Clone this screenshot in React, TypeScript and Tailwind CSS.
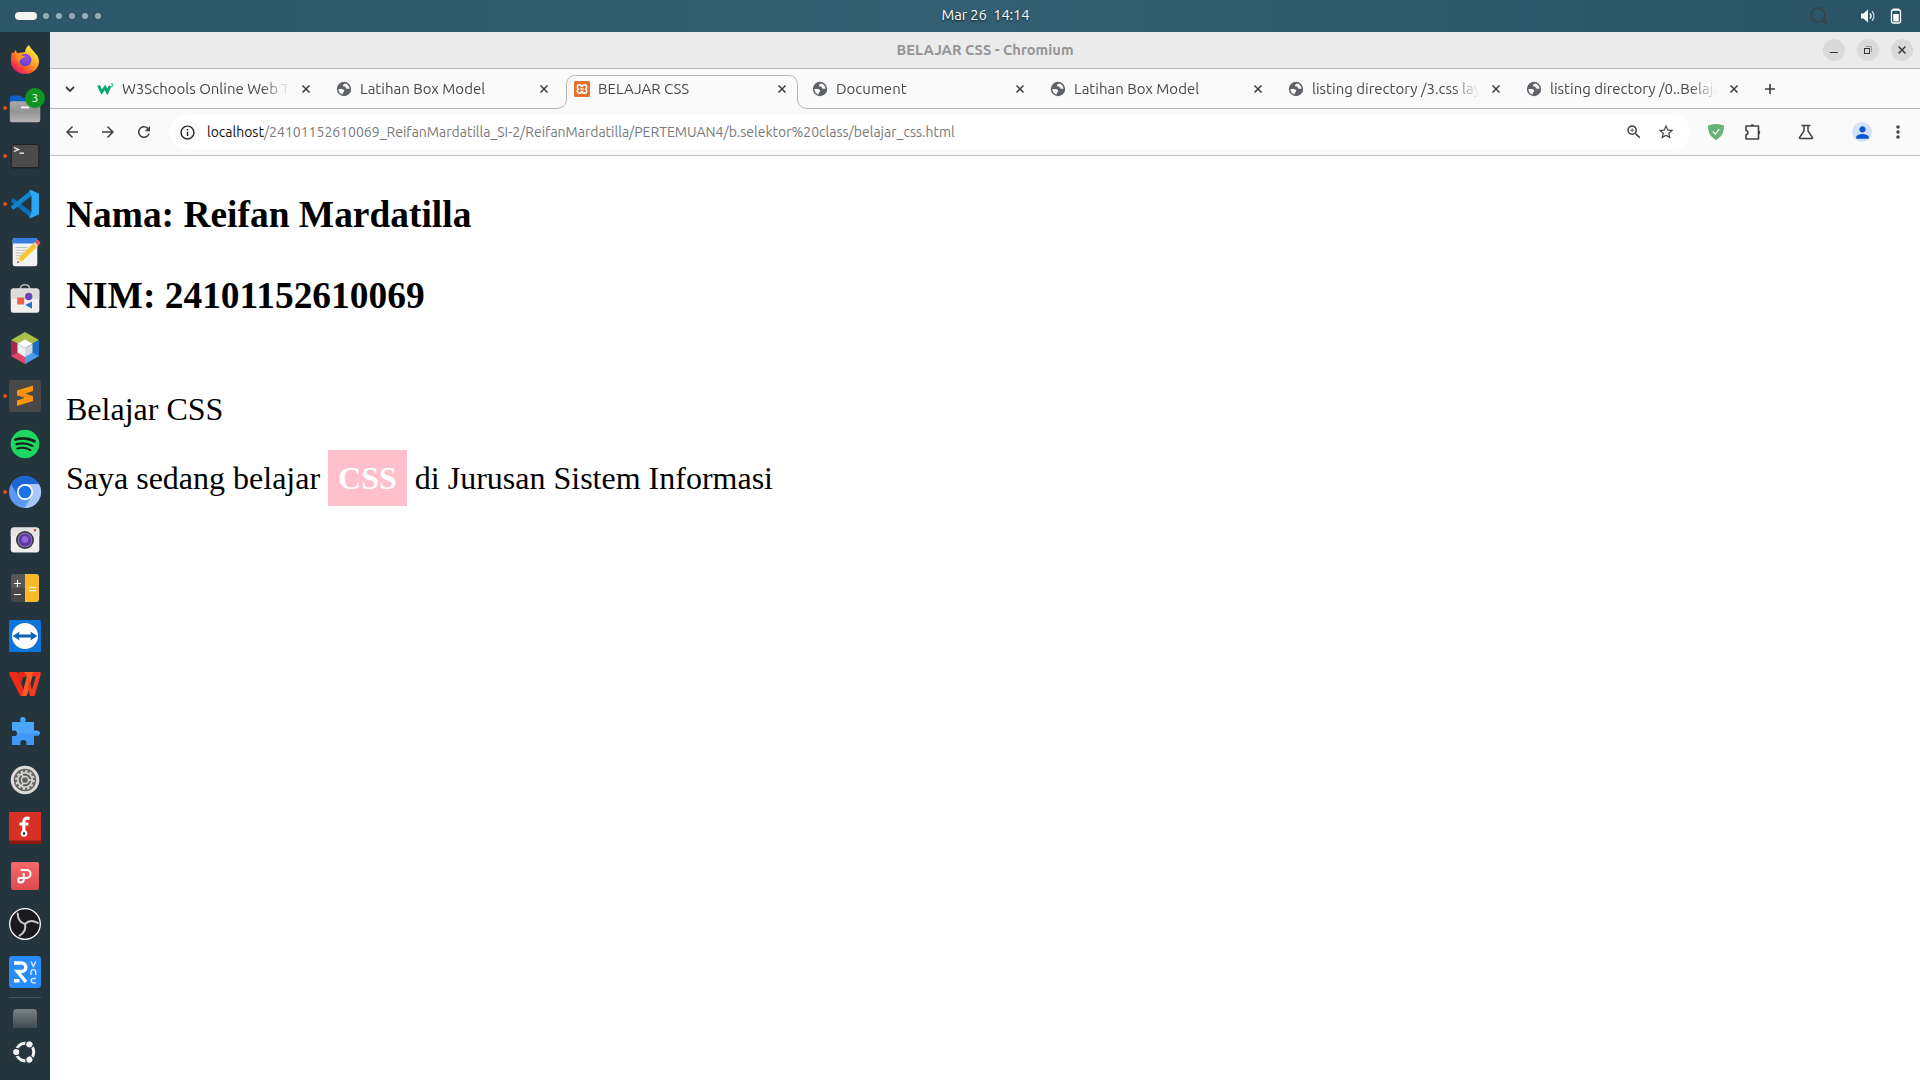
import React from "react";
import {
  MdArrowBack,
  MdArrowForward,
  MdRefresh,
  MdInfoOutline,
  MdStarBorder,
  MdOutlineZoomIn,
  MdMoreVert,
  MdPerson,
} from "react-icons/md";

const UI = "font-['Ubuntu','Noto_Sans',sans-serif]";

function Icon({ children }: { children: React.ReactNode }) {
  return (
    <svg width="32" height="32" viewBox="0 0 32 32" className="block overflow-visible">
      {children}
    </svg>
  );
}

const Firefox = () => (
  <Icon>
    <defs>
      <linearGradient id="ffBody" x1="0.85" y1="0.1" x2="0.2" y2="0.95">
        <stop offset="0" stopColor="#fff04a" />
        <stop offset="0.35" stopColor="#ffb327" />
        <stop offset="0.65" stopColor="#ff6a2b" />
        <stop offset="0.85" stopColor="#f8384a" />
        <stop offset="1" stopColor="#dd1577" />
      </linearGradient>
      <radialGradient id="ffCore" cx="0.6" cy="0.3" r="0.8">
        <stop offset="0" stopColor="#a04be8" />
        <stop offset="1" stopColor="#5040c8" />
      </radialGradient>
    </defs>
    <path d="M20 1c1 3 4 5 6 8 2.500 2 4 5 4 8.500A14 12.800 0 0 1 2 17c0-4 .5-7 1-9l1.500 1.500L6.500 6l1.800 3.200c1.500-.7 3.500-1 5.500-.7L16 8c.3-3 2-5.500 4-7z" fill="url(#ffBody)" />
    <circle cx="16.200" cy="16" r="6.200" fill="url(#ffCore)" />
    <path d="M5.500 9c3-.5 4.500.7 6 2.200l4.300.8c-.2 1.500-1.800 1.900-3.200 2.800-1.700 1-2.500 2.400-2.100 4.700C8 16.500 8 12 5.500 9z" fill="#ff9320" />
  </Icon>
);

const Files = () => (
  <div className="relative">
    <Icon>
      <defs>
        <linearGradient id="fold" x1="0" y1="0" x2="0" y2="1">
          <stop offset="0" stopColor="#a8a8a8" />
          <stop offset="0.5" stopColor="#959595" />
          <stop offset="1" stopColor="#b6b6b6" />
        </linearGradient>
      </defs>
      <path d="M1 12V5.500A2 2 0 0 1 3 3.500h8l3 2.500h14a2 2 0 0 1 2 2v5z" fill="#0d60c8" />
      <rect x="0.8" y="9.300" width="30.500" height="21" rx="2.200" fill="url(#fold)" />
      <rect x="12" y="14.500" width="8" height="1.800" rx="0.500" fill="#fff" />
    </Icon>
    <span className={`absolute -top-1 left-4 flex h-5 w-5 items-center justify-center rounded-full bg-[#0f9620] text-[12px] leading-none text-white shadow-sm ${UI}`}>
      3
    </span>
  </div>
);

const Terminal = () => (
  <Icon>
    <rect x="1.800" y="4" width="28.500" height="24.500" rx="2.500" fill="#202122" />
    <rect x="2.800" y="5" width="26.500" height="22" rx="1.500" fill="#4b4b4b" />
    <path d="M5 7.500l4.500 2L5 11.500M10.500 13.200h4.500" stroke="#fff" strokeWidth="1.300" fill="none" />
  </Icon>
);

const VsCode = () => (
  <Icon>
    <path d="M2.200 12.200l2.200-1.900 19 14.400L22 30 2.200 13.700z" fill="#0a6fb8" />
    <path d="M2.200 19.800l2.200 1.900 19-14.400L22 2 2.200 18.300z" fill="#1184d0" />
    <path d="M22 2l7.200 3.300a1.300 1.300 0 0 1 .8 1.200v19a1.300 1.300 0 0 1-.8 1.200L22 30c-.8.2-1.500-.4-1.500-1L22.500 24V8l-2-5c0-.8.7-1.200 1.500-1z" fill="#2ba6f2" />
  </Icon>
);

const TextEditor = () => (
  <Icon>
    <rect x="3.700" y="2" width="24.600" height="28.300" rx="2.500" fill="#f3f3f3" />
    <path d="M3.700 7.600V4.500A2.500 2.500 0 0 1 6.200 2h19.600a2.500 2.500 0 0 1 2.500 2.500v3.100z" fill="#3a7de0" />
    <path d="M6.500 11.500h12M6.500 14.200h12M6.500 17h10M6.500 19.700h7M6.500 22.500h4" stroke="#bdbdb8" strokeWidth="1" />
    <path d="M8 27l1.700-5L24.500 7.200l3.600 3.600L13 25.500z" fill="#f8c62e" />
    <path d="M8 27l1.700-5 3.300 3.500z" fill="#f2dfc0" />
    <path d="M8 27l.7-2 1.300 1.300z" fill="#333" />
    <path d="M24.500 7.200l1.200-1.200 3.600 3.600-1.200 1.200z" fill="#d8d8d8" />
    <path d="M25.700 6l1.800-1.700a1.500 1.500 0 0 1 2 0L31 5.900a1.500 1.500 0 0 1 0 2l-1.700 1.700z" fill="#e8565b" />
  </Icon>
);

const Store = () => (
  <Icon>
    <path d="M11.300 5.500C11.300 2 13 .8 16 .8s4.700 1.200 4.700 4.700" stroke="#b5b5b2" strokeWidth="1.400" fill="none" />
    <rect x="1.800" y="4.500" width="28.500" height="24.300" rx="2.500" fill="#f1f0ee" />
    <path d="M1.800 15V7a2.500 2.500 0 0 1 2.500-2.500h23.500a2.500 2.500 0 0 1 2.500 2.500v8z" fill="#dddcd9" />
    <rect x="8.200" y="13.500" width="7" height="7" fill="#f0614c" />
    <circle cx="19.700" cy="12.500" r="3.700" fill="#6b45bb" />
    <path d="M23 17.500v7.300l-6.700-3.700z" fill="#2474cd" />
  </Icon>
);

const NetBeans = () => (
  <Icon>
    <path d="M16 0l14 8-7 4-7-4-7 4-7-4z" fill="#aabf49" />
    <path d="M2 8l7 4v8.500L16 24v8L2 24z" fill="#a7284f" />
    <path d="M9 20.500L16 24v8L2 24z" fill="#dc4668" />
    <path d="M30 8l-7 4v8.500L16 24v8l14-8z" fill="#1b6bc0" />
    <path d="M23 20.500L16 24v8l14-8z" fill="#4b9de9" />
    <path d="M16 7.500l7.500 4.300L16 16l-7.500-4.200z" fill="#fff" />
    <path d="M8.500 11.800L16 16v9l-7.500-4.500z" fill="#eef0f2" />
    <path d="M23.500 11.800L16 16v9l7.500-4.500z" fill="#cfd8e2" />
  </Icon>
);

const Sublime = () => (
  <Icon>
    <rect width="32" height="32" rx="2" fill="#484848" />
    <path d="M8 10.500l16-5v5.500l-8.500 2.700L24 16.200V21L8 26v-5.500l8.500-2.700L8 15.300z" fill="#ff9800" />
    <path d="M8 10.500v4.800l16 5.200v-4.300z" fill="#f98f12" />
  </Icon>
);

const Spotify = () => (
  <Icon>
    <circle cx="16" cy="16" r="14.300" fill="#1ed760" />
    <path d="M6.500 11.500c6.500-1.800 13.500-1.200 19 1.800" stroke="#15231c" strokeWidth="2.800" strokeLinecap="round" fill="none" />
    <path d="M7.500 16.200c5.500-1.600 11-1 16 1.700" stroke="#15231c" strokeWidth="2.300" strokeLinecap="round" fill="none" />
    <path d="M8.300 20.500c4.700-1.300 9-.8 13.200 1.600" stroke="#15231c" strokeWidth="1.900" strokeLinecap="round" fill="none" />
  </Icon>
);

const Chromium = () => (
  <Icon>
    <circle cx="16" cy="16" r="16" fill="#5f98f3" />
    <path d="M16 8h13.900A16 16 0 0 1 15.500 32L23 20z" fill="#a9c8fa" />
    <path d="M2.200 8A16 16 0 0 1 29.900 8H16l-7 12z" fill="#1b66d2" />
    <circle cx="16" cy="16" r="8" fill="#fff" />
    <circle cx="16" cy="16" r="6.300" fill="#1a73e8" />
  </Icon>
);

const Camera = () => (
  <Icon>
    <rect x="1.800" y="3.500" width="28.500" height="25" rx="3" fill="#efefee" />
    <path d="M1.800 12V6.500a3 3 0 0 1 3-3h22.500a3 3 0 0 1 3 3V12z" fill="#e3e3e1" />
    <circle cx="16" cy="16" r="9" fill="#3b3846" />
    <circle cx="16" cy="16" r="7.300" fill="#8b88a0" />
    <circle cx="16" cy="16" r="6.500" fill="#623aab" />
    <circle cx="16" cy="15.500" r="3.300" fill="#9566d9" />
    <rect x="25" y="5.200" width="2" height="2" fill="#e02020" />
  </Icon>
);

const Calculator = () => (
  <Icon>
    <path d="M2 5a3 3 0 0 1 3-3h11v28H5a3 3 0 0 1-3-3z" fill="#484848" />
    <path d="M2 5a3 3 0 0 1 3-3h11v14H2z" fill="#575757" />
    <path d="M16 2h11a3 3 0 0 1 3 3v22a3 3 0 0 1-3 3H16z" fill="#fbb829" />
    <path d="M5 11.500h7M8.500 8v7M5 22.500h7M20 15.500h7M20 18.700h7" stroke="#fff" strokeWidth="1.200" />
  </Icon>
);

const TeamViewer = () => (
  <Icon>
    <rect width="32" height="32" rx="1.500" fill="#0b75da" />
    <circle cx="16" cy="16" r="13" fill="#fff" />
    <path d="M3.700 16l7-4.500-.8 3h12.200l-.8-3 7 4.500-7 4.500.8-3H9.900l.8 3z" fill="#0c62b5" />
  </Icon>
);

const Wps = () => (
  <Icon>
    <path d="M1.500 4H7c1 0 1.400.4 1.700 1.300L16 26.500c-.4 1-1 1.500-2 1.500h-1.500c-1 0-1.500-.4-1.800-1.300L.2 6C-.1 4.800.4 4 1.500 4z" fill="#f22a1c" />
    <path d="M14.500 4H23c1 0 1.400.5 1.200 1.500L18.300 26.500c-.4 1-1 1.500-2 1.500h-3.500L17.800 8.500h-4.500z" fill="#ff5a26" />
    <path d="M8.700 5.300c.8-1 1.500-1.300 2.500-1.300h4l3 4.500h-4L12 16z" fill="#e3261a" />
    <path d="M20.700 13l2.300 9 3.800-13.800h-4.300L24 4h6.500c1.100 0 1.600.8 1.300 2L26 26.700c-.2.800-.6 1.300-1.500 1.300H22c-.8 0-1.300-.5-1.400-1.500L18.800 19z" fill="#f53a20" />
  </Icon>
);

const Puzzle = () => (
  <Icon>
    <g transform="translate(0 -0.900)">
      <path d="M3 7h7.800c.6 0 .7-.5.500-1C10.500 3.500 11.800 2 13.800 2s3.400 1.500 2.600 4c-.2.500 0 1 .6 1h8v8c0 .7.500.9 1 .6 2.500-.8 5 .3 5 2.400s-2.500 3.200-5 2.400c-.500-.2-1 0-1 .6V30h-7c-.7 0-.8-.6-.6-1 .7-2.500-.9-4-3-4s-3.700 1.500-3 4c.2.500 0 1-.6 1H3v-8.500c0-.7.4-.8 1-.6C6.500 21.700 8 20.300 8 18.300s-1.500-3.300-4-2.600c-.6.200-1 0-1-.7z" fill="#4ba5fb" />
      <path d="M8 18.500h23c0 2-2.500 3.200-5 2.400-.5-.2-1 0-1 .6V30h-7c-.7 0-.8-.6-.6-1 .7-2.500-.9-4-3-4s-3.700 1.500-3 4c.2.500 0 1-.6 1H3v-8.500c3 .5 5-.5 5-3z" fill="#2f82e8" opacity="0.350" />
    </g>
  </Icon>
);

const Settings = () => (
  <Icon>
    <circle cx="16" cy="16" r="14.300" fill="#dcdbd9" />
    <circle cx="16" cy="16" r="11.200" fill="#626260" />
    <circle cx="16" cy="16" r="8.800" fill="none" stroke="#d8d8d6" strokeWidth="2" strokeDasharray="2.300 2.307" />
    <circle cx="16" cy="16" r="7.200" fill="none" stroke="#d8d8d6" strokeWidth="1.600" />
    <circle cx="16" cy="16" r="3.600" fill="none" stroke="#d8d8d6" strokeWidth="1.500" />
    <path d="M19.500 16H23M14.300 19l-1.800 3M14.300 13l-1.800-3" stroke="#d8d8d6" strokeWidth="1.600" />
  </Icon>
);

const RedF = () => (
  <Icon>
    <rect width="32" height="32" fill="#d93025" />
    <rect y="28.500" width="32" height="3.500" fill="#8a1a10" />
    <path d="M20.500 6.500c-3.500-1-5.700.2-5.700 3.500v11M10.500 12h9" stroke="#fff" strokeWidth="3.200" fill="none" />
    <circle cx="15" cy="21.500" r="2.300" fill="#222" stroke="#fff" strokeWidth="2" />
  </Icon>
);

const Parabolic = () => (
  <Icon>
    <defs>
      <linearGradient id="par" x1="0" y1="0" x2="0" y2="1">
        <stop offset="0" stopColor="#f86a6a" />
        <stop offset="1" stopColor="#dd4a4e" />
      </linearGradient>
    </defs>
    <rect x="2" y="2" width="28" height="28" rx="2" fill="url(#par)" />
    <path d="M12.500 10h5a4 4 0 0 1 0 8h-6a2.200 2.200 0 0 0 0 4.400c2.300 0 3.300-1 3.300-3V14" stroke="#fff" strokeWidth="2" strokeLinecap="round" fill="none" />
  </Icon>
);

const OBS_ARM = "M16 16C11.500 14.800 8.800 11 8.700 5.500";
const Obs = () => (
  <Icon>
    <circle cx="16" cy="16" r="15.300" fill="#1b191c" stroke="#fff" strokeWidth="1.300" />
    <g fill="none" stroke="#c9c9cb" strokeWidth="2" strokeLinecap="round">
      <path d={OBS_ARM} />
      <path d={OBS_ARM} transform="rotate(120 16 16)" />
      <path d={OBS_ARM} transform="rotate(240 16 16)" />
    </g>
  </Icon>
);

const RealVnc = () => (
  <Icon>
    <rect width="32" height="32" rx="3" fill="#288dfa" />
    <path d="M5 7h7.500a4.300 4.300 0 0 1 0 8.600H8.500L17 26M5 24.700h5.500" stroke="#fff" strokeWidth="3.500" fill="none" />
    <g stroke="#d6e9ff" strokeWidth="1.400" fill="none">
      <path d="M22 5.500l2.300 5 2.500-5" />
      <path d="M22 19v-3a2.300 2.300 0 0 1 4.700 0v3" />
      <path d="M26.800 22.500h-2.500a2.100 2.100 0 0 0 0 4.200h2.500" />
    </g>
  </Icon>
);

const dock: { C: React.FC; on?: boolean }[] = [
  { C: Firefox },
  { C: Files, on: true },
  { C: Terminal, on: true },
  { C: VsCode, on: true },
  { C: TextEditor },
  { C: Store },
  { C: NetBeans },
  { C: Sublime, on: true },
  { C: Spotify },
  { C: Chromium, on: true },
  { C: Camera },
  { C: Calculator },
  { C: TeamViewer },
  { C: Wps },
  { C: Puzzle },
  { C: Settings },
  { C: RedF },
  { C: Parabolic },
  { C: Obs },
  { C: RealVnc },
];

function Dock() {
  return (
    <aside className="flex w-[50px] shrink-0 flex-col items-center bg-[#24353d] pt-1">
      {dock.map(({ C, on }, i) => (
        <div key={i} className="flex h-12 w-full shrink-0 items-center">
          <span className={`mr-[2px] ml-[3px] h-1 w-1 rounded-full ${on ? "bg-[#e04f1c]" : ""}`} />
          <C />
        </div>
      ))}
      <div className="mt-px h-px w-8 bg-[#48545b]" />
      <div className="mt-[11px] h-[19px] w-6 rounded-t bg-linear-to-b from-[#7b8285] to-[#3f4b51]" />
      <svg width="26" height="26" viewBox="0 0 26 26" className="mt-[11px]">
        <circle cx="13" cy="13" r="8.800" fill="none" stroke="#f4f4f4" strokeWidth="3" />
        {[0, 120, 240].map((a) => (
          <circle key={a} cx="4.200" cy="13" r="3.700" fill="#f4f4f4" stroke="#24353d" strokeWidth="1.200" transform={`rotate(${a} 13 13)`} />
        ))}
      </svg>
    </aside>
  );
}

const Globe = () => (
  <svg width="16" height="16" viewBox="0 0 16 16">
    <circle cx="8" cy="8" r="7.200" fill="#5f6368" />
    <path d="M8.800 2.500c-.4.800-1.800.8-1.900 1.800-.1 1 1 1 1.900 1.300 1 .3.700 1.300 1.600 1.800.9.500 2 .3 3.200.3C13.300 5 11.500 2.800 8.800 2.500zM2.400 7.900c1.400.2 3.200-.2 4.500.4 1.300.6 1.700 1.700.8 2.600-.7.800-1.100 1-1.100 2.500C4 12.700 2.400 10.500 2.400 7.900z" fill="#fafafa" />
  </svg>
);

const W3 = () => (
  <svg width="18" height="16" viewBox="0 0 18 16">
    <path d="M1.500 4.500l3.200 6.500L8 6.500l2.300 4.500L13 5" fill="none" stroke="#04a46c" strokeWidth="2.800" />
    <path d="M13.700 2.800h2.200l-1.200 1.400c1.800 0 1.400 2.100-.9 1.500" fill="none" stroke="#04a46c" strokeWidth="0.800" />
  </svg>
);

const Xampp = () => (
  <svg width="16" height="16" viewBox="0 0 16 16">
    <rect width="16" height="16" rx="1.500" fill="#ea6f2c" />
    <path d="M8 6C7.500 4 6.500 3.700 5.200 3.700 3 3.700 2.800 6.500 4.300 8 2.800 9.500 3 12.300 5.200 12.300c1.500 0 2.500-.7 2.800-2.300.3 1.600 1.300 2.300 2.800 2.300 2.200 0 2.400-2.800.9-4.300 1.500-1.500 1.300-4.300-.9-4.300C9.500 3.700 8.500 4 8 6zM6.500 8h3" fill="none" stroke="#fff" strokeWidth="1.600" />
  </svg>
);

const Cross = () => (
  <svg width="8" height="8" viewBox="0 0 8 8" className="block">
    <path d="M0.500 0.500l7 7M7.500 0.500l-7 7" stroke="#3a3b3d" strokeWidth="1.500" />
  </svg>
);

const tabs = [
  { title: "W3Schools Online Web Tutorials", icon: W3 },
  { title: "Latihan Box Model", icon: Globe },
  { title: "BELAJAR CSS", icon: Xampp, active: true },
  { title: "Document", icon: Globe },
  { title: "Latihan Box Model", icon: Globe },
  { title: "listing directory /3.css layout", icon: Globe },
  { title: "listing directory /0..Belajar", icon: Globe },
];

function TabStrip() {
  return (
    <div className="flex h-10 items-center border-b border-[#b4b4b4] bg-[#fafafa] pl-4">
      <svg width="10" height="8" viewBox="0 0 10 8" className="mr-[20px] ml-[-1px]">
        <path d="M1 2l4 4 4-4" fill="none" stroke="#3a3b3d" strokeWidth="1.800" />
      </svg>
      <div className="flex h-full">
        {tabs.map(({ title, icon: I, active }, i) => (
          <div key={i} className="relative flex h-full w-[238px] items-center">
            {active && (
              <svg className="absolute top-0 -left-[15px]" width="252" height="40" viewBox="0 0 252 40">
                <path d="M0 39.500V40H252V39.500C245 39.500 242 35 242 30V16.500C242 10 238.500 6.500 232.500 6.500H19.500C13.500 6.500 10.500 10 10.500 16.500V30C10.500 35 7 39.500 0 39.500z" fill="#fafafa" />
                <path d="M0 39.500C7 39.500 10.500 35 10.500 30V16.500C10.500 10 13.500 6.500 19.500 6.500H232.500C238.500 6.500 241.500 10 241.500 16.500V30C241.500 35 245 39.500 252 39.500" fill="none" stroke="#b4b4b4" />
              </svg>
            )}
            <span className="relative ml-[2px] flex w-[18px] justify-center">
              <I />
            </span>
            <span className="relative ml-[7px] w-[167px] overflow-hidden [mask-image:linear-gradient(to_right,black_84%,transparent)] text-[15px] leading-5 whitespace-nowrap text-[#46484b]">
              {title}
            </span>
            <span className="relative ml-[13px]">
              <Cross />
            </span>
          </div>
        ))}
      </div>
      <svg width="12" height="12" viewBox="0 0 12 12" className="ml-[3px]">
        <path d="M6 1v10M1 6h10" stroke="#3a3b3d" strokeWidth="1.600" />
      </svg>
    </div>
  );
}

function Toolbar() {
  return (
    <div className="flex h-[47px] items-center border-b border-[#c0c0c0] bg-[#fafafa] text-[#3f4144]">
      <MdArrowBack size={18} className="ml-[13px]" />
      <MdArrowForward size={18} className="ml-[18px]" />
      <MdRefresh size={18} className="ml-[18px]" />
      <div className="ml-[17px] flex h-[34px] w-[1520px] items-center rounded-full bg-white">
        <span className="ml-1 flex h-[26px] w-[26px] items-center justify-center rounded-full bg-[#fafafa]">
          <MdInfoOutline size={17} className="text-[#202124]" />
        </span>
        <span className="ml-[7px] w-[1250px] text-[14px] whitespace-nowrap text-[#77797c]">
          <span className="text-[#111]">localhost</span>
          /24101152610069_ReifanMardatilla_SI-2/ReifanMardatilla/PERTEMUAN4/b.selektor%20class/belajar_css.html
        </span>
        <span className="flex-1" />
        <MdOutlineZoomIn size={18} className="mr-[14px]" />
        <MdStarBorder size={18} className="mr-[15px]" />
      </div>
      <svg width="16" height="16" viewBox="0 0 16 16" className="ml-[18px]">
        <path d="M8 0c2.500 0 5.500.6 8 1.600 0 6-1.500 10.900-8 14.400C1.500 12.500 0 7.600 0 1.600 2.500.6 5.500 0 8 0z" fill="#67b279" />
        <path d="M4.800 7.500l2.500 2.600 4-5" fill="none" stroke="#fff" strokeWidth="1.200" />
      </svg>
      <svg width="18" height="18" viewBox="0 0 18 18" className="ml-[20px]">
        <path d="M2 3h12.500v13H2v-4.300c2.500-.3 2.500-4.100 0-4.400z" fill="none" stroke="currentColor" strokeWidth="1.600" strokeLinejoin="round" />
        <path d="M6.300 3c.2-2.400 3.700-2.400 3.900 0zM14.500 7.600c2.300.2 2.300 3.700 0 3.900z" fill="currentColor" />
      </svg>
      <svg width="16" height="16" viewBox="0 0 16 16" className="ml-[36px]">
        <path d="M3.500 1.500h9M6 1.500V7l-4.500 6.500c-.2.500 0 1 .7 1h11.600c.7 0 .9-.5.700-1L10 7V1.500" fill="none" stroke="currentColor" strokeWidth="1.500" />
      </svg>
      <span className="ml-[38px] flex h-5 w-5 items-center justify-center rounded-full bg-[#d3e3fd]">
        <MdPerson size={19} className="text-[#0b57d0]" />
      </span>
      <MdMoreVert size={20} className="ml-[16px]" />
    </div>
  );
}

function TitleBar() {
  const btn = "flex h-[22px] w-[22px] items-center justify-center rounded-full bg-[#dadada]";
  return (
    <div className="grid h-[37px] grid-cols-[1fr_auto_1fr] items-center border-b border-[#bababa] bg-[#ebebeb]">
      <span />
      <span className="text-[14.667px] font-bold text-[#959595]">BELAJAR CSS - Chromium</span>
      <div className="flex justify-end gap-3 pr-[7px]">
        <span className={btn}>
          <svg width="10" height="10" viewBox="0 0 10 10">
            <path d="M1 7.500h8" stroke="#3d3d3d" />
          </svg>
        </span>
        <span className={btn}>
          <svg width="10" height="10" viewBox="0 0 10 10">
            <rect x="1.500" y="3.500" width="5" height="5" fill="none" stroke="#333" />
            <path d="M3 1.500h5.500V7" fill="none" stroke="#999" />
          </svg>
        </span>
        <span className={btn}>
          <Cross />
        </span>
      </div>
    </div>
  );
}

function TopBar() {
  return (
    <header className="grid h-8 shrink-0 grid-cols-[1fr_auto_1fr] items-center bg-linear-to-r from-[#2d5769] via-[#325f71] to-[#2b5366]">
      <div className="flex items-center gap-[7px] pl-[15px]">
        <span className="-mr-px h-2 w-[22px] rounded-full bg-[#f4f4f4]" />
        {[0, 1, 2, 3, 4].map((n) => (
          <span key={n} className="h-[6px] w-[6px] rounded-full bg-[#97abb4]" />
        ))}
      </div>
      <span className="-mt-[3px] pl-[51px] text-[14.667px] tracking-[-0.1px] whitespace-pre text-white [text-shadow:0_1px_2px_rgba(0,0,0,0.7)]">
        Mar 26  14:14
      </span>
      <div className="flex items-center justify-end">
        <svg width="18" height="18" viewBox="0 0 18 18">
          <circle cx="8" cy="8" r="7" fill="none" stroke="#3d3f41" strokeWidth="1.400" />
          <path d="M12.500 12.500l4.200 4.200" stroke="#3d3f41" strokeWidth="2.200" />
        </svg>
        <svg width="16" height="16" viewBox="0 0 16 16" className="ml-8">
          <path d="M1 5.500h2.500L8 1.500v13L3.500 10.500H1z" fill="#fff" />
          <path d="M10 5.500c1.200 1.400 1.200 3.600 0 5" fill="none" stroke="#fff" strokeWidth="1.300" />
          <path d="M12 3.300c2.600 2.500 2.600 6.900 0 9.400" fill="none" stroke="#cfd8dc" strokeWidth="1.200" />
        </svg>
        <svg width="12" height="16" viewBox="0 0 12 16" className="mr-[18px] ml-[14px]">
          <path d="M3 0.500h6v1.500H3z" fill="#fff" />
          <rect x="1.500" y="2" width="9" height="13" rx="1.500" fill="none" stroke="#fff" strokeWidth="1.300" />
          <rect x="3.300" y="6" width="5.400" height="7.500" fill="#fff" />
        </svg>
      </div>
    </header>
  );
}

export default function App() {
  return (
    <div className={`flex h-[1080px] w-[1920px] flex-col overflow-hidden bg-white ${UI}`}>
      <TopBar />
      <div className="flex min-h-0 flex-1">
        <Dock />
        <main className="flex min-w-0 flex-1 flex-col">
          <TitleBar />
          <TabStrip />
          <Toolbar />
          <article className="flex-1 px-4 pt-[37px] font-['Liberation_Serif',serif] text-[32px] leading-[37px] text-black">
            <h3 className="text-[37.44px] leading-[43px] font-bold">Nama: Reifan Mardatilla</h3>
            <h3 className="mt-[38px] text-[37.44px] leading-[43px] font-bold">NIM: 24101152610069</h3>
            <p className="mt-[74px]">Belajar CSS</p>
            <p className="mt-8">
              Saya sedang belajar <span className="bg-[#ffc0cb] p-[10px] font-bold text-white">CSS</span> di Jurusan Sistem Informasi
            </p>
          </article>
        </main>
      </div>
    </div>
  );
}
